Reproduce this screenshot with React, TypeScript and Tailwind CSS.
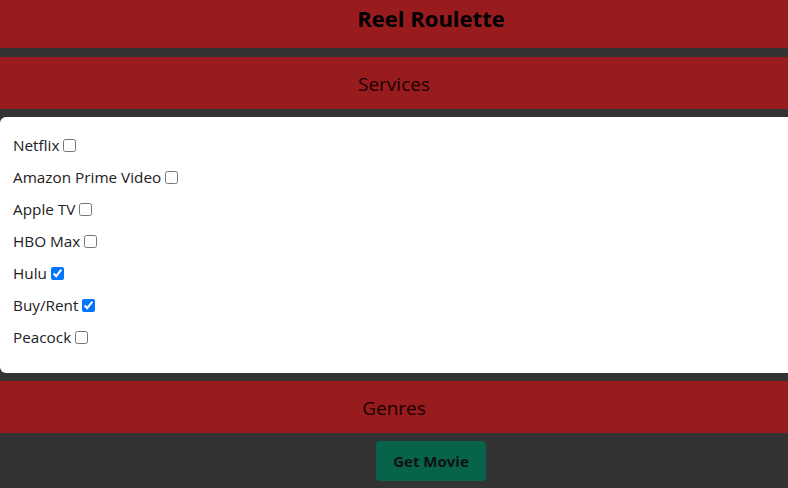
import { useState } from "react";

const services = [
  { name: "Netflix", checked: false },
  { name: "Amazon Prime Video", checked: false },
  { name: "Apple TV", checked: false },
  { name: "HBO Max", checked: false },
  { name: "Hulu", checked: true },
  { name: "Buy/Rent", checked: true },
  { name: "Peacock", checked: false },
];

const App = () => {
  const [picked, setPicked] = useState(services.map((s) => s.checked));

  return (
    <div className="min-h-[488px] bg-[#333333] font-['Open_Sans',sans-serif] text-black">
      {/* Header */}
      <header className="h-12 bg-[#981b1e] pt-[2px] pl-[74px] text-center">
        <h1 className="text-[22px] font-bold leading-8">Reel Roulette</h1>
      </header>

      <div className="mt-[9px] flex h-[52px] items-center justify-center bg-[#981b1e] pt-[2px] text-[19px] text-[#1a0000]">
        Services
      </div>

      {/* Services list */}
      <div className="mt-2 rounded-l-md bg-white pt-4 pr-4 pb-4 pl-[13px]">
        {services.map((s, i) => (
          <label key={s.name} className="mb-2 flex h-6 items-center text-[15.3px] text-[#222]">
            {s.name}
            <input
              type="checkbox"
              className="ml-1 h-[13px] w-[13px]"
              checked={picked[i]}
              onChange={() =>
                setPicked((p) => p.map((v, j) => (j === i ? !v : v)))
              }
            />
          </label>
        ))}
      </div>

      <div className="mt-2 flex h-[52px] items-center justify-center bg-[#981b1e] pt-[2px] text-[19px] text-[#1a0000]">
        Genres
      </div>

      <div className="flex justify-center pt-2 pl-[74px]">
        <button className="h-10 w-[110px] rounded-sm bg-[#07644a] text-[15px] font-bold text-[#111]">
          Get Movie
        </button>
      </div>
    </div>
  );
};

export default App;
